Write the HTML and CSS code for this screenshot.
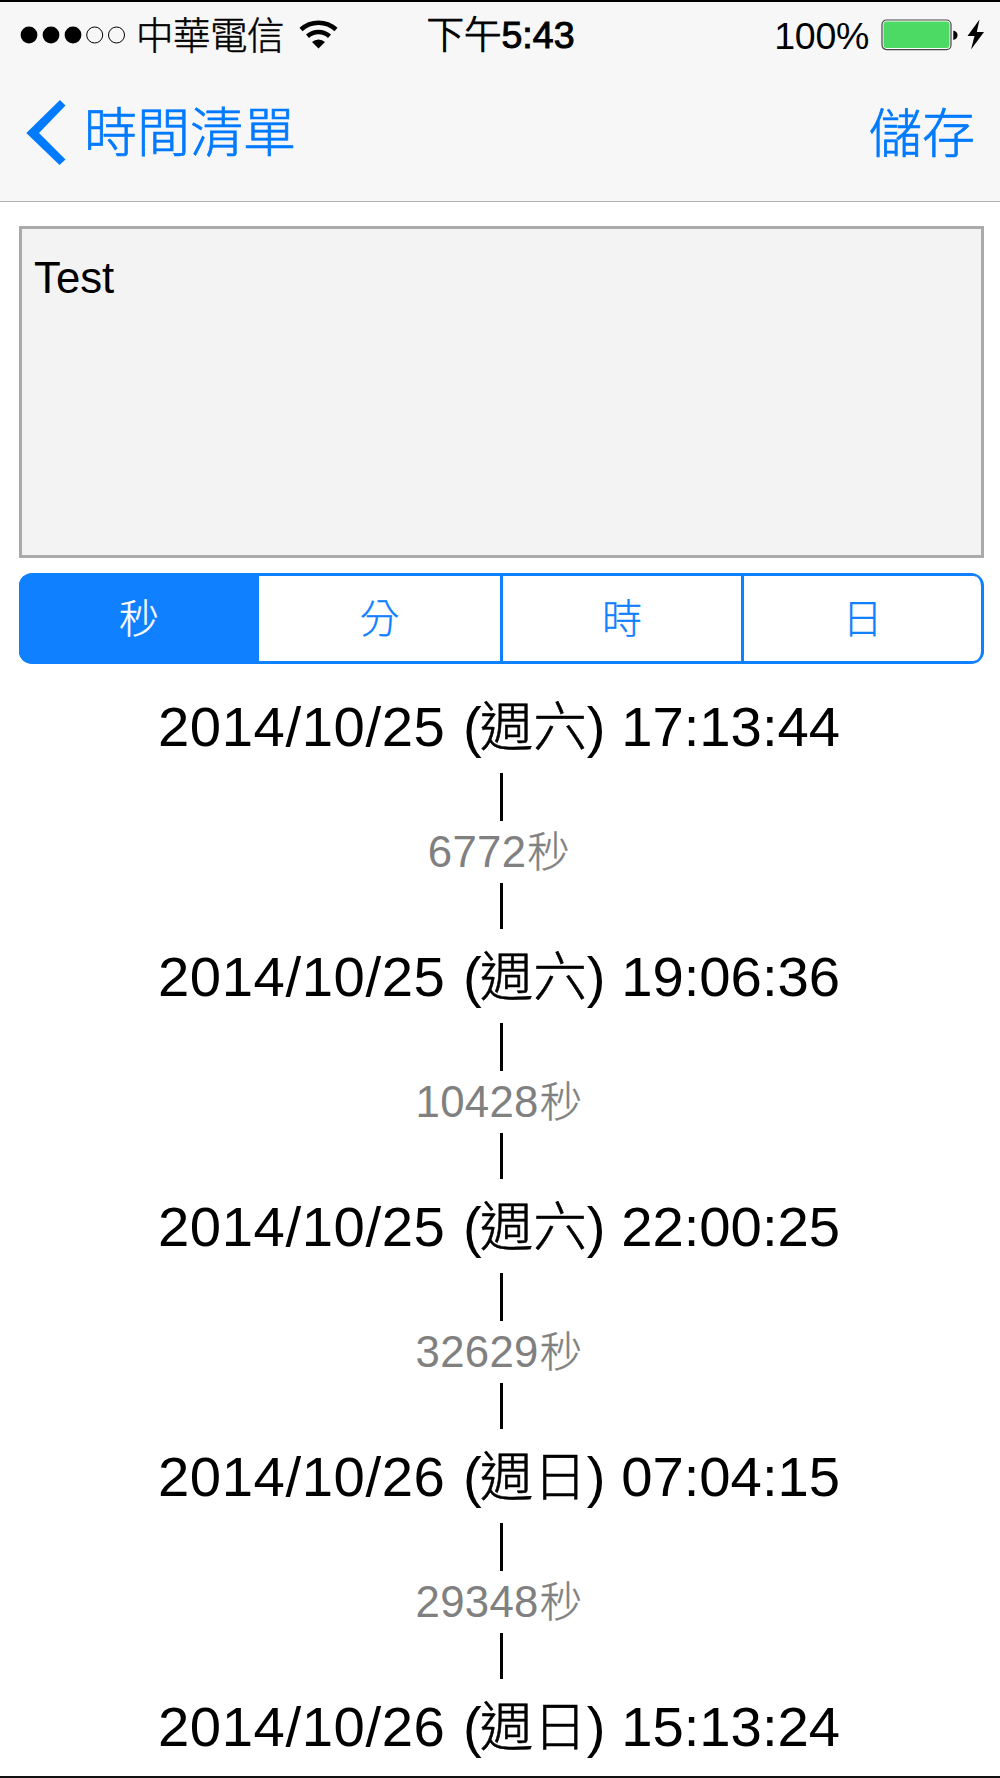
FILE: index.html
```
<!DOCTYPE html>
<html lang="zh-Hant">
<head>
    <meta charset="UTF-8">
    <meta name="viewport" content="width=device-width, initial-scale=1.0">
    <title>時間清單</title>
    <link rel="stylesheet" href="styles.css">
</head>
<body>

<header>
    <div class="status-bar">
        <div class="status-left">
            <svg class="signal" width="106" height="20" viewBox="0 0 106 20">
                <circle cx="9" cy="10" r="8.4"/>
                <circle cx="31" cy="10" r="8.4"/>
                <circle cx="53" cy="10" r="8.4"/>
                <circle class="empty" cx="74.7" cy="10" r="8"/>
                <circle class="empty" cx="96.5" cy="10" r="8"/>
            </svg>
            <span class="carrier">中華電信</span>
            <svg class="wifi" width="40" height="30" viewBox="0 0 40 30">
                <path class="arc" d="M2 9.5 A26 26 0 0 1 37 9.5"/>
                <path class="arc" d="M8.5 16.2 A16.5 16.5 0 0 1 30.5 16.2"/>
                <path d="M19.5 28.5 L13 22 A9.5 9.5 0 0 1 26 22 Z"/>
            </svg>
        </div>
        <div class="status-time">下午5:43</div>
        <div class="status-right">
            <span class="percent">100%</span>
            <svg class="battery" width="78" height="32" viewBox="0 0 78 32">
                <rect class="battery-case" x="1" y="1" width="69" height="29.6" rx="4.5"/>
                <rect class="battery-level" x="2.5" y="2.5" width="66" height="26.6" rx="3"/>
                <path d="M72.3 11.5 C78 12.5 78 20 72.3 21 Z"/>
            </svg>
            <svg class="bolt" width="18" height="32" viewBox="0 0 18 32">
                <path d="M12.5 0.5 L0.5 17 H7.5 L4 30.5 L17 13 H9.8 Z"/>
            </svg>
        </div>
    </div>
    <nav>
        <a class="back" href="#">
            <svg width="42" height="68" viewBox="0 0 42 68">
                <path d="M35 1 L40.5 6.5 L14 34 L40.5 60.5 L34.5 66 L1.3 34 Z"/>
            </svg>
            <span>時間清單</span>
        </a>
        <a class="save" href="#">儲存</a>
    </nav>
</header>

<main>
    <div class="note" contenteditable="true" spellcheck="false">Test</div>

    <div class="segments">
        <button class="active">秒</button>
        <button>分</button>
        <button>時</button>
        <button>日</button>
    </div>

    <div class="timeline">
        <div class="date"><span class="day">2014/10/25</span> (<span class="weekday">週六</span>) 17:13:44</div>
        <div class="interval">6772<span class="unit">秒</span></div>
        <div class="date"><span class="day">2014/10/25</span> (<span class="weekday">週六</span>) 19:06:36</div>
        <div class="interval">10428<span class="unit">秒</span></div>
        <div class="date"><span class="day">2014/10/25</span> (<span class="weekday">週六</span>) 22:00:25</div>
        <div class="interval">32629<span class="unit">秒</span></div>
        <div class="date"><span class="day">2014/10/26</span> (<span class="weekday">週日</span>) 07:04:15</div>
        <div class="interval">29348<span class="unit">秒</span></div>
        <div class="date"><span class="day">2014/10/26</span> (<span class="weekday">週日</span>) 15:13:24</div>
    </div>
</main>

</body>
</html>
```
FILE: styles.css
```
* {
    box-sizing: border-box;
}
body {
    font-family: "Liberation Sans", "Noto Sans CJK TC", sans-serif;
    font-weight: 300;
    margin: 0;
    height: 1778px;
    overflow: hidden;
    background-color: white;
    color: black;
    border-top: 2px solid black;
    border-bottom: 2px solid #111;
}
header {
    height: 200px;
    background-color: #f7f7f7;
    border-bottom: 1px solid #b2b2b2;
}
.status-bar {
    display: grid;
    grid-template-columns: 1fr auto 1fr;
    height: 62px;
    padding: 0 15px 0 20px;
    font-size: 37.5px;
    line-height: 62px;
}
.status-left,
.status-right {
    display: flex;
    align-items: center;
}
.status-right {
    justify-content: flex-end;
}
.signal .empty {
    fill: none;
    stroke: black;
    stroke-width: 1;
}
.carrier {
    margin-left: 10px;
    padding-top: 3px;
    letter-spacing: -0.5px;
    -webkit-text-stroke: 0.5px black;
}
.wifi {
    margin-left: 15px;
}
.wifi .arc {
    fill: none;
    stroke: black;
    stroke-width: 4.5;
}
.status-time {
    padding: 2px 4px 0 0;
    -webkit-text-stroke: 1px black;
}
.percent {
    padding-top: 2px;
    letter-spacing: -0.3px;
}
.battery {
    margin-left: 12px;
}
.battery-case {
    fill: white;
    stroke: #444;
    stroke-width: 1.2;
}
.battery-level {
    fill: #4cd964;
}
.bolt {
    margin-left: 8px;
}
nav {
    display: flex;
    justify-content: space-between;
    height: 138px;
    padding: 0 25px;
    font-size: 53px;
    line-height: 138px;
}
nav a {
    color: #007aff;
    text-decoration: none;
    -webkit-text-stroke: 0.7px #007aff;
}
.back {
    display: flex;
    align-items: center;
}
.back svg {
    fill: #007aff;
    margin-right: 17px;
}
.back span,
.save {
    padding-top: 2px;
}
main {
    padding: 24px 16px 0 19px;
}
.note {
    height: 332px;
    padding: 25px 12px;
    border: 3px solid #aaa;
    background-color: #f3f3f3;
    font-size: 43.75px;
    line-height: 48px;
    outline: none;
}
.segments {
    display: grid;
    grid-template-columns: 240px 244px 241px 240px;
    height: 91px;
    margin-top: 15px;
    border-radius: 13px;
    overflow: hidden;
    background-color: #0f80ff;
    padding: 3px 0;
}
.segments button {
    font: inherit;
    font-size: 40px;
    line-height: 84px;
    padding: 0;
    border: 0;
    border-right: 3px solid #0f80ff;
    background-color: white;
    color: #0f80ff;
    -webkit-text-stroke: 0.3px;
}
.segments button:last-child {
    border-radius: 0 10px 10px 0;
}
.segments .active {
    background-color: #0f80ff;
    color: white;
    border-right: 0;
}
.timeline {
    padding-top: 15px;
    text-align: center;
}
.date {
    height: 94px;
    padding-right: 5px;
    font-size: 56.25px;
    line-height: 95px;
    white-space: nowrap;
}
.day {
    letter-spacing: 0.6px;
    margin-right: 2px;
}
.weekday {
    display: inline-block;
    margin-left: -2px;
    font-size: 53.5px;
    line-height: 1;
    -webkit-text-stroke: 0.6px black;
}
.interval {
    padding-right: 5px;
    font-size: 43.75px;
    line-height: 62px;
    letter-spacing: 0.3px;
    color: #808080;
}
.unit {
    font-size: 42.5px;
    line-height: 1;
    margin-left: 1px;
    -webkit-text-stroke: 0.4px #808080;
}
/* connector lines above and below each interval */
.interval::before,
.interval::after {
    content: "";
    display: block;
    width: 3px;
    height: 48px;
    margin-left: 481px;
    background-color: black;
}
.interval::after {
    height: 46px;
}
```
